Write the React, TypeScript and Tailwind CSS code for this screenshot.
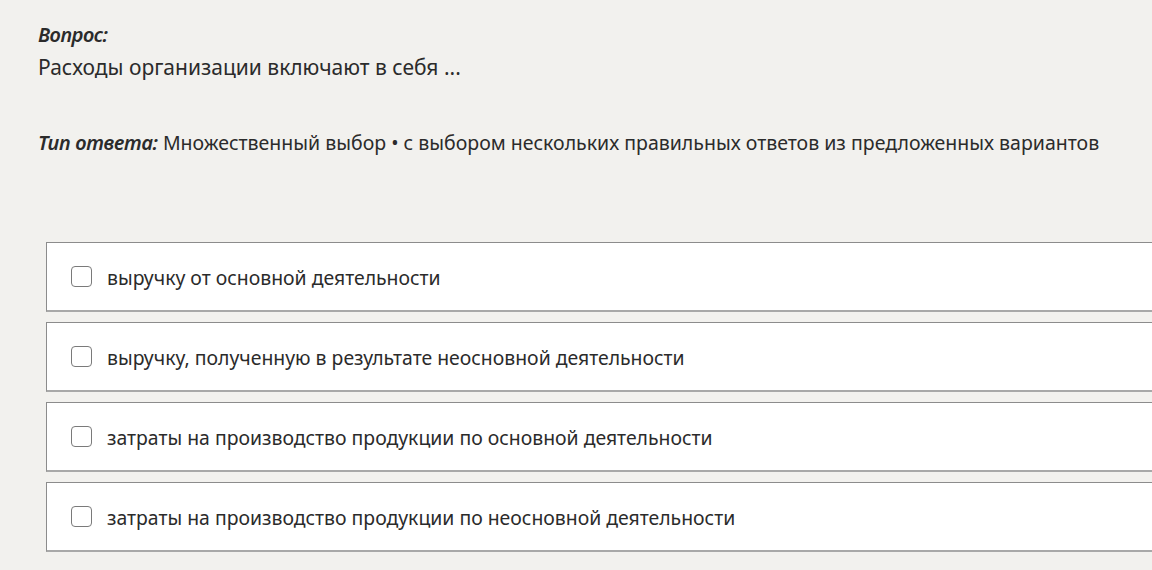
const options = [
  "выручку от основной деятельности",
  "выручку, полученную в результате неосновной деятельности",
  "затраты на производство продукции по основной деятельности",
  "затраты на производство продукции по неосновной деятельности",
]

export default function App() {
  return (
    <div className="w-[1152px] h-[570px] overflow-hidden bg-[#f2f1ee] text-[#2b2b2b] font-['Noto_Sans',sans-serif]">
      <div className="pt-[22px] pl-[38px]">
        <div className="text-[20px] leading-[26px] italic font-semibold tracking-[-0.5px]">Вопрос:</div>
        <div className="mt-[5px] text-[21px] leading-[28px]">Расходы организации включают в себя ...</div>
        <div className="mt-[48px] text-[19.5px] leading-[28px]">
          <span className="italic font-semibold tracking-[-0.3px] text-[20px]">Тип ответа:</span> Множественный выбор • с выбором нескольких правильных ответов из предложенных вариантов
        </div>
        <div className="mt-[85px] ml-[8px] w-[1140px] flex flex-col gap-[10px]">
          {options.map((o) => (
            <label
              key={o}
              className="h-[70px] bg-white border border-[#8c8c8c] border-b-2 border-b-[#a8a8a8] flex items-center pl-[24px] gap-[15px]"
            >
              <span className="w-[21px] h-[21px] rounded-[4px] border border-[#7a7a7a] bg-white shrink-0" />
              <span className="text-[19.4px] leading-[28px] mt-[3px]">{o}</span>
            </label>
          ))}
        </div>
      </div>
    </div>
  )
}
